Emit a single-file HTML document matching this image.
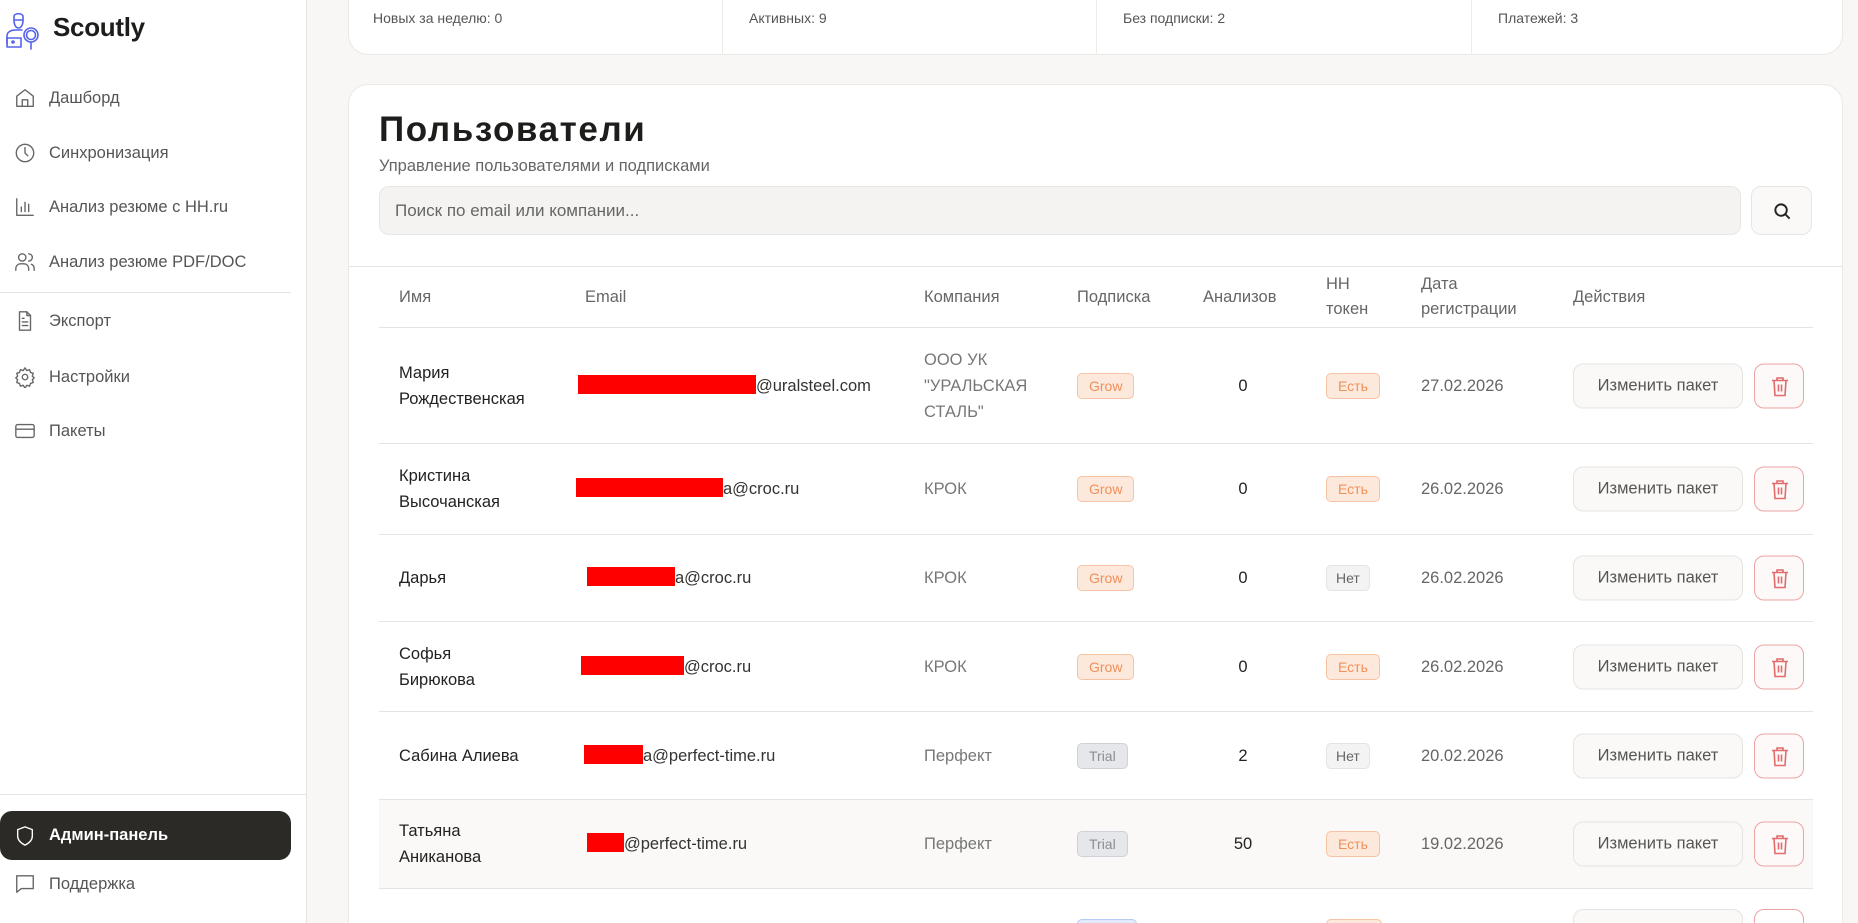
<!DOCTYPE html>
<html style="width:1858px;height:923px;overflow:hidden"><head><meta charset="utf-8"><style>
*{box-sizing:border-box;margin:0;padding:0}
body{width:1858px;height:923px;overflow:hidden;background:#f8f7f5;font-family:"Liberation Sans","Noto Sans CJK SC",sans-serif;color:#2a2a2a;position:relative}
.sb{position:absolute;left:0;top:0;width:307px;height:923px;background:#fff;border-right:1px solid #e6e4e1}
.logo{position:absolute;left:53px;top:12px;font-size:26px;font-weight:bold;color:#1d1d1b;letter-spacing:-0.3px}
.nav{position:absolute;left:0;width:291px;height:40px;display:flex;align-items:center;font-size:16.5px;color:#555}
.nav svg{position:absolute;left:14px;width:22px;height:22px;fill:none;stroke:#666;stroke-width:1.5;stroke-linecap:round;stroke-linejoin:round}
.nav span{position:absolute;left:49px}
.hr{position:absolute;height:1px;background:#e6e4e1}
.adm{background:#2b2a26;border-radius:12px;color:#fff;font-weight:bold;height:49px}
.adm svg{stroke:#fff}
.card{position:absolute;background:#fff;border:1px solid #ebe9e6;border-radius:20px}
.st{position:absolute;top:10px;font-size:14px;color:#555}
.vd{position:absolute;top:0;width:1px;height:55px;background:#eeece9}
.h{position:absolute;font-size:16.5px;color:#666;line-height:25px}
.row{position:absolute;left:379px;width:1434px;border-bottom:1px solid #e6e4e1}
.c{position:absolute;top:50%;transform:translateY(-50%);font-size:16.5px;line-height:26px}
.nm{left:20px;color:#222}
.em{left:200px;color:#333;white-space:nowrap}
.em i{display:inline-block;background:#f00;height:19px;vertical-align:-3px}
.co{left:545px;color:#777}
.bd{font-size:14px;border-radius:5px;padding:0 11px;line-height:24px;border:1px solid}
.g{background:#fde8dc;color:#f0905a;border-color:#f6c3a5}
.t{background:#e6e7ea;color:#8b8d93;border-color:#cfd1d6}
.n{background:#f3f3f3;color:#666;border-color:#e3e3e3;padding:0 9px}
.b{background:#e2eafc;border-color:#b8c9f5}
.an{left:816px;width:96px;text-align:center;color:#222}
.hh{left:947px}
.dt{left:1042px;color:#666}
.btn{left:1194px;width:170px;height:45px;border:1px solid #e6e4e1;background:#faf9f7;border-radius:10px;color:#555;text-align:center;line-height:43px}
.del{left:1375px;width:50px;height:45px;border:1px solid #eba4a4;background:#fcf9f8;border-radius:10px}
.del svg{position:absolute;left:16px;top:12px;width:18px;height:20px;fill:none;stroke:#e26b6b;stroke-width:1.6}
</style></head><body>
<div class="sb">
<svg style="position:absolute;left:4px;top:10px" width="38" height="40" viewBox="0 0 38 40" fill="none" stroke="#5563ea" stroke-width="1.6" stroke-linecap="round" stroke-linejoin="round">
<path d="M10 6c1-3 8-3 9 0v4h-9z"/><path d="M10 10c0 5 2 8 4.5 8s4.5-3 4.5-8"/><path d="M3 34v-8c0-4 4-6 8-6h7"/><rect x="3" y="28" width="14" height="9"/><circle cx="9" cy="32" r="1"/><circle cx="27" cy="25" r="7"/><circle cx="27" cy="25" r="4.5"/><path d="M27 32v7"/></svg>
<div class="logo">Scoutly</div>
<div class="nav" style="top:78px"><svg viewBox="0 0 24 24"><path d="M3 10l9-7 9 7v11H3z"/><path d="M9 21v-7h6v7"/></svg><span>Дашборд</span></div>
<div class="nav" style="top:133px"><svg viewBox="0 0 24 24"><circle cx="12" cy="12" r="9.5"/><path d="M12 6v6l3 3"/></svg><span>Синхронизация</span></div>
<div class="nav" style="top:187px"><svg viewBox="0 0 24 24"><path d="M3 3v18h18M8 17v-5M12 17V7M16 17v-8"/></svg><span>Анализ резюме с HH.ru</span></div>
<div class="nav" style="top:242px"><svg viewBox="0 0 24 24"><circle cx="9" cy="7" r="4"/><path d="M2 21v-2a5 5 0 015-5h4a5 5 0 015 5v2M16 3a4 4 0 010 8M22 21v-2a5 5 0 00-3-4.5"/></svg><span>Анализ резюме PDF/DOC</span></div>
<div class="hr" style="top:292px;left:0;width:291px"></div>
<div class="nav" style="top:301px"><svg viewBox="0 0 24 24"><path d="M14 2H6v20h12V6z"/><path d="M14 2v4h4M9 13h6M9 17h6M9 9h2"/></svg><span>Экспорт</span></div>
<div class="nav" style="top:357px"><svg viewBox="0 0 24 24"><circle cx="12" cy="12" r="3"/><path d="M12 2l2 3 3-1 1 3 3 1-1 3 2 2-2 2 1 3-3 1-1 3-3-1-2 3-2-3-3 1-1-3-3-1 1-3-2-2 2-2-1-3 3-1 1-3 3 1z"/></svg><span>Настройки</span></div>
<div class="nav" style="top:411px"><svg viewBox="0 0 24 24"><rect x="2" y="5" width="20" height="14" rx="2"/><path d="M2 10h20"/></svg><span>Пакеты</span></div>
<div class="hr" style="top:794px;left:0;width:307px"></div>
<div class="nav adm" style="top:811px"><svg viewBox="0 0 24 24"><path d="M12 2l8 3v7c0 5-4 8-8 10-4-2-8-5-8-10V5z"/></svg><span>Админ-панель</span></div>
<div class="nav" style="top:864px"><svg viewBox="0 0 24 24"><path d="M3 3h18v14H8l-5 4z"/></svg><span>Поддержка</span></div>
</div>

<div class="card" style="left:348px;top:-20px;width:1495px;height:75px;border-top:none">
<div class="st" style="left:24px;top:30px">Новых за неделю: 0</div>
<div class="st" style="left:400px;top:30px">Активных: 9</div>
<div class="st" style="left:774px;top:30px">Без подписки: 2</div>
<div class="st" style="left:1149px;top:30px">Платежей: 3</div>
<div class="vd" style="left:373px;top:20px"></div><div class="vd" style="left:747px;top:20px"></div><div class="vd" style="left:1122px;top:20px"></div>
</div>

<div class="card" style="left:348px;top:84px;width:1495px;height:860px"></div>
<div style="position:absolute;left:379px;top:110px;font-size:35px;font-weight:bold;color:#1d1d1b;letter-spacing:1.6px">Пользователи</div>
<div style="position:absolute;left:379px;top:157px;font-size:16.5px;color:#666">Управление пользователями и подписками</div>
<div style="position:absolute;left:379px;top:186px;width:1362px;height:49px;background:#f4f3f1;border:1px solid #e8e6e3;border-radius:10px;font-size:17px;color:#666;padding:14px 0 0 15px">Поиск по email или компании...</div>
<div style="position:absolute;left:1751px;top:186px;width:61px;height:49px;background:#faf9f7;border:1px solid #e8e6e3;border-radius:10px"><svg style="position:absolute;left:21px;top:15px" width="19" height="19" viewBox="0 0 20 20" fill="none" stroke="#222" stroke-width="2"><circle cx="8.5" cy="8.5" r="6"/><path d="M13 13l4.5 4.5"/></svg></div>
<div class="hr" style="top:266px;left:349px;width:1493px"></div>

<div class="h" style="left:399px;top:285px">Имя</div>
<div class="h" style="left:585px;top:285px">Email</div>
<div class="h" style="left:924px;top:285px">Компания</div>
<div class="h" style="left:1077px;top:285px">Подписка</div>
<div class="h" style="left:1203px;top:285px">Анализов</div>
<div class="h" style="left:1326px;top:272px">HH<br>токен</div>
<div class="h" style="left:1421px;top:272px">Дата<br>регистрации</div>
<div class="h" style="left:1573px;top:285px">Действия</div>
<div class="row" style="top:266px;height:62px"></div>

<div class="row" style="top:328px;height:116px">
<div class="c nm">Мария<br>Рождественская</div>
<div class="c em" style="left:199px"><i style="width:178px"></i>@uralsteel.com</div>
<div class="c co">ООО УК<br>"УРАЛЬСКАЯ<br>СТАЛЬ"</div>
<div class="c bd g" style="left:698px">Grow</div><div class="c an">0</div><div class="c bd g hh">Есть</div>
<div class="c dt">27.02.2026</div><div class="c btn">Изменить пакет</div>
<div class="c del"><svg viewBox="0 0 18 20"><path d="M1 4h16M6 4V1.5h6V4M3 4l1 15h10l1-15M7.5 8v7M10.5 8v7"/></svg></div></div>

<div class="row" style="top:444px;height:91px">
<div class="c nm">Кристина<br>Высочанская</div>
<div class="c em" style="left:197px"><i style="width:147px"></i>a@croc.ru</div>
<div class="c co">КРОК</div>
<div class="c bd g" style="left:698px">Grow</div><div class="c an">0</div><div class="c bd g hh">Есть</div>
<div class="c dt">26.02.2026</div><div class="c btn">Изменить пакет</div>
<div class="c del"><svg viewBox="0 0 18 20"><path d="M1 4h16M6 4V1.5h6V4M3 4l1 15h10l1-15M7.5 8v7M10.5 8v7"/></svg></div></div>

<div class="row" style="top:535px;height:87px">
<div class="c nm">Дарья</div>
<div class="c em" style="left:208px"><i style="width:88px"></i>a@croc.ru</div>
<div class="c co">КРОК</div>
<div class="c bd g" style="left:698px">Grow</div><div class="c an">0</div><div class="c bd n hh">Нет</div>
<div class="c dt">26.02.2026</div><div class="c btn">Изменить пакет</div>
<div class="c del"><svg viewBox="0 0 18 20"><path d="M1 4h16M6 4V1.5h6V4M3 4l1 15h10l1-15M7.5 8v7M10.5 8v7"/></svg></div></div>

<div class="row" style="top:622px;height:90px">
<div class="c nm">Софья<br>Бирюкова</div>
<div class="c em" style="left:202px"><i style="width:103px"></i>@croc.ru</div>
<div class="c co">КРОК</div>
<div class="c bd g" style="left:698px">Grow</div><div class="c an">0</div><div class="c bd g hh">Есть</div>
<div class="c dt">26.02.2026</div><div class="c btn">Изменить пакет</div>
<div class="c del"><svg viewBox="0 0 18 20"><path d="M1 4h16M6 4V1.5h6V4M3 4l1 15h10l1-15M7.5 8v7M10.5 8v7"/></svg></div></div>

<div class="row" style="top:712px;height:88px">
<div class="c nm">Сабина Алиева</div>
<div class="c em" style="left:205px"><i style="width:59px"></i>a@perfect-time.ru</div>
<div class="c co">Перфект</div>
<div class="c bd t" style="left:698px">Trial</div><div class="c an">2</div><div class="c bd n hh">Нет</div>
<div class="c dt">20.02.2026</div><div class="c btn">Изменить пакет</div>
<div class="c del"><svg viewBox="0 0 18 20"><path d="M1 4h16M6 4V1.5h6V4M3 4l1 15h10l1-15M7.5 8v7M10.5 8v7"/></svg></div></div>

<div class="row" style="top:800px;height:89px;background:#faf9f7">
<div class="c nm">Татьяна<br>Аниканова</div>
<div class="c em" style="left:208px"><i style="width:37px"></i>@perfect-time.ru</div>
<div class="c co">Перфект</div>
<div class="c bd t" style="left:698px">Trial</div><div class="c an">50</div><div class="c bd g hh">Есть</div>
<div class="c dt">19.02.2026</div><div class="c btn">Изменить пакет</div>
<div class="c del"><svg viewBox="0 0 18 20"><path d="M1 4h16M6 4V1.5h6V4M3 4l1 15h10l1-15M7.5 8v7M10.5 8v7"/></svg></div></div>

<div class="row" style="top:889px;height:34px;border:none;overflow:hidden">
<div class="bd b" style="position:absolute;left:698px;top:30px;width:60px;height:24px"></div>
<div class="bd g" style="position:absolute;left:947px;top:30px;width:56px;height:24px"></div>
<div style="position:absolute;top:20px;left:1194px;width:170px;height:45px;border:1px solid #e6e4e1;border-radius:10px;background:#faf9f7"></div>
<div style="position:absolute;top:20px;left:1375px;width:50px;height:45px;border:1px solid #eba4a4;border-radius:10px"></div>
</div>
</body></html>
